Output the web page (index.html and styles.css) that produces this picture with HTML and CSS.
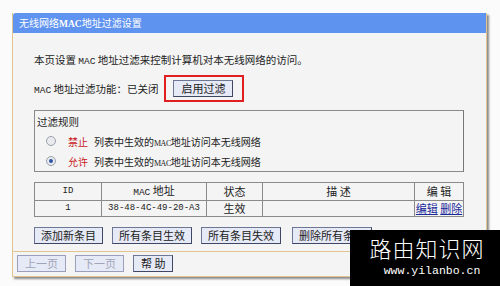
FILE: index.html
```html
<!DOCTYPE html>
<html>
<head>
  <meta charset="utf-8">
  <link rel="stylesheet" href="styles.css">
</head>
<body>
  <div class="panel">
    <div class="panel-title">无线网络<span class="serif">MAC</span>地址过滤设置</div>
    <div class="panel-body">
      <p class="intro">本页设置 <span class="mono">MAC</span> 地址过滤来控制计算机对本无线网络的访问。</p>

      <div class="status-row">
        <span><span class="mono">MAC</span> 地址过滤功能：已关闭</span>
        <span class="highlight"><button class="btn">启用过滤</button></span>
      </div>

      <div class="rules">
        <div class="rules-title">过滤规则</div>
        <label class="rule">
          <span class="radio"></span>
          <span class="red">禁止</span>
          <span>列表中生效的<span class="tiny">MAC</span>地址访问本无线网络</span>
        </label>
        <label class="rule">
          <span class="radio checked"></span>
          <span class="red">允许</span>
          <span>列表中生效的<span class="tiny">MAC</span>地址访问本无线网络</span>
        </label>
      </div>

      <table class="list">
        <tr>
          <th class="c-id mono">ID</th>
          <th class="c-mac"><span class="mono">MAC</span> 地址</th>
          <th class="c-state">状态</th>
          <th class="c-desc">描 述</th>
          <th class="c-edit">编 辑</th>
        </tr>
        <tr>
          <td class="mono">1</td>
          <td class="mono">38-48-4C-49-20-A3</td>
          <td>生效</td>
          <td></td>
          <td><a href="#">编辑</a> <a href="#">删除</a></td>
        </tr>
      </table>

      <div class="actions">
        <button class="btn">添加新条目</button>
        <button class="btn">所有条目生效</button>
        <button class="btn">所有条目失效</button>
        <button class="btn">删除所有条目</button>
      </div>
    </div>
    <div class="panel-foot">
      <button class="btn disabled">上一页</button>
      <button class="btn disabled">下一页</button>
      <button class="btn">帮 助</button>
    </div>
  </div>

  <div class="watermark">
    <div class="wm-name">路由知识网</div>
    <div class="wm-url">www.yilanbo.cn</div>
  </div>
</body>
</html>
```

FILE: styles.css
```css
/* Router MAC filter page */
body {
  margin: 0;
  width: 500px;
  height: 286px;
  background: #fbfbfb;
  font-family: "Noto Sans CJK SC", "DejaVu Sans", sans-serif;
  font-size: 10.5px;
  color: #222;
  overflow: hidden;
  position: relative;
}

.mono {
  font-family: "Liberation Mono", "DejaVu Sans Mono", monospace;
  font-size: 9.5px;
}

.serif {
  font-family: "Liberation Serif", serif;
  font-size: 9.5px;
  font-weight: bold;
}

.tiny {
  font-family: "Liberation Serif", serif;
  font-size: 8px;
  letter-spacing: -0.5px;
}

/* Panel */
.panel {
  margin: 13px 0 0 12px;
  width: 473px;
  height: 263px;
  background: #f4f4f4;
  border-left: 1px solid #e2c58e;
  border-right: 1px solid #e2c58e;
  border-bottom: 1px solid #e2c58e;
  box-shadow: 2px 2px 2px rgba(0, 0, 0, 0.45);
  display: flex;
  flex-direction: column;
}

.panel-title {
  height: 20px;
  line-height: 20px;
  background: #5f93f0;
  color: #fff;
  padding-left: 6px;
  font-size: 10px;
  border-radius: 3px 0 0 0;
}

.panel-body {
  padding: 0 0 0 21px;
  height: 218px;
  border-bottom: 1px solid #e2c58e;
  display: flex;
  flex-direction: column;
}

.intro {
  margin: 19px 0 0;
  height: 16px;
  line-height: 16px;
}

.status-row {
  margin-top: 7px;
  height: 26px;
  display: flex;
  align-items: center;
  gap: 6px;
}

.highlight {
  border: 2px solid #e02020;
  padding: 3px 9px 3px 7px;
  display: flex;
}

/* Buttons */
.btn {
  font-family: "Noto Sans CJK SC", sans-serif;
  font-size: 11px;
  height: 17px;
  line-height: 13px;
  padding: 0 7px;
  background: #e6e9f6;
  color: #222;
  border: 1px solid #6e7696;
  border-right-color: #3f4666;
  border-bottom-color: #3f4666;
  margin: 0;
}

.actions .btn {
  padding: 0 6px;
}

.btn.disabled {
  color: #a0a4b8;
  border-color: #9aa0bc;
}

/* Rules box */
.rules {
  margin-top: 9px;
  width: 430px;
  height: 62px;
  border: 1px solid #8a8a8a;
  border-right-color: #777;
  box-sizing: border-box;
  padding: 2px 0 0 2px;
}

.rules-title {
  height: 18px;
  line-height: 18px;
}

.rule {
  display: flex;
  align-items: center;
  gap: 6px;
  height: 20px;
  padding-left: 9px;
  font-size: 10px;
}

.red {
  color: #c8191a;
}

.radio {
  width: 8px;
  height: 8px;
  border-radius: 50%;
  border: 1px solid #9aa2ae;
  background: #e8eaee;
  margin-right: 6px;
  position: relative;
}

.radio.checked::after {
  content: '';
  position: absolute;
  left: 2px;
  top: 2px;
  width: 4px;
  height: 4px;
  border-radius: 50%;
  background: #2f56a8;
}

/* Table */
.list {
  margin-top: 10px;
  width: 430px;
  border-collapse: collapse;
  border: 1px solid #7c7c7c;
}

.list th,
.list td {
  border: 1px solid #8a8a8a;
  height: 15px;
  padding: 0;
  text-align: center;
  font-weight: normal;
  font-size: 11px;
  line-height: 15px;
}

.list td.mono,
.list th.mono {
  font-size: 9px;
}

.c-id { width: 66px; }
.c-mac { width: 104px; }
.c-state { width: 55px; }
.c-desc { width: 151px; }

.list a {
  color: #1a2a9a;
  text-decoration: underline;
}

.actions {
  margin-top: 10px;
  display: flex;
  gap: 9px;
}

.actions .btn:nth-child(4) {
  margin-left: 2px;
}

.panel-foot {
  padding: 3px 0 0 4px;
  display: flex;
  gap: 9px;
}

/* Watermark overlay */
.watermark {
  position: absolute;
  left: 350px;
  top: 230px;
  width: 150px;
  height: 56px;
  background: #000;
  color: #fff;
  text-align: center;
}

.wm-name {
  font-family: "Noto Sans CJK SC", sans-serif;
  font-size: 22px;
  line-height: 24px;
  margin-top: 5px;
  padding-left: 4px;
  font-weight: 300;
  letter-spacing: 1px;
}

.wm-url {
  font-family: "Liberation Mono", monospace;
  font-size: 11.5px;
  line-height: 13px;
  margin-top: 5px;
  padding-left: 14px;
}
```
